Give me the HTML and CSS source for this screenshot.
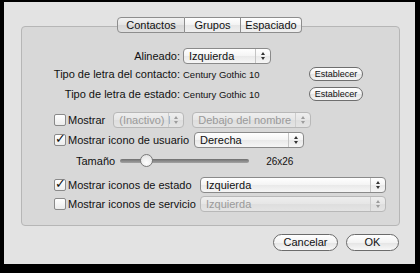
FILE: index.html
```html
<!DOCTYPE html>
<html lang="es">
<head>
  <meta charset="UTF-8">
  <title>Preferencias de lista</title>
  <link rel="stylesheet" href="styles.css">
</head>
<body>
<div class="window">
  <div class="tabs">
    <span class="tab on t1">Contactos</span>
    <span class="tab t2">Grupos</span>
    <span class="tab t3">Espaciado</span>
  </div>

  <div class="box">
    <div class="row r1">
      <span class="lbl">Alineado:</span>
      <div class="popup align">Izquierda<i class="arr"></i></div>
    </div>
    <div class="row r2">
      <span class="lbl">Tipo de letra del contacto:</span>
      <span class="font">Century Gothic 10</span>
      <button class="small">Establecer</button>
    </div>
    <div class="row r3">
      <span class="lbl">Tipo de letra de estado:</span>
      <span class="font">Century Gothic 10</span>
      <button class="small">Establecer</button>
    </div>

    <div class="row r4 chk">
      <span class="cb"></span><span class="txt">Mostrar</span>
      <div class="popup off show">(Inactivo) I<i class="arr"></i></div>
      <div class="popup off where">Debajo del nombre<i class="arr"></i></div>
    </div>
    <div class="row r5 chk">
      <span class="cb on">&#10003;</span><span class="txt">Mostrar icono de usuario</span>
      <div class="popup side">Derecha<i class="arr"></i></div>
    </div>
    <div class="row r6 size">
      <span class="txt">Tamaño</span>
      <div class="slider"><span class="knob"></span></div>
      <span class="dim">26x26</span>
    </div>

    <div class="row r7 chk">
      <span class="cb on">&#10003;</span><span class="txt fixed">Mostrar iconos de estado</span>
      <div class="popup wide">Izquierda<i class="arr"></i></div>
    </div>
    <div class="row r8 chk">
      <span class="cb"></span><span class="txt fixed">Mostrar iconos de servicio</span>
      <div class="popup wide off">Izquierda<i class="arr"></i></div>
    </div>
  </div>

  <div class="actions">
    <button class="big cancel">Cancelar</button>
    <button class="big ok">OK</button>
  </div>
</div>
</body>
</html>
```

FILE: styles.css
```css
* {
  box-sizing: border-box;
}

body {
  margin: 0;
  padding: 2px 5px 9px 4px;
  background: #000;
  font-family: "Liberation Sans", Arial, sans-serif;
  font-size: 11px;
  color: #111;
}

.window {
  width: 411px;
  height: 262px;
  background: #e3e3e3;
  overflow: hidden;
  padding-top: 15px;
}

/* segmented tabs */
.tabs {
  position: relative;
  z-index: 1;
  display: flex;
  justify-content: center;
  height: 16px;
}

.tab {
  height: 16px;
  line-height: 14px;
  text-align: center;
  border: 1px solid #8d8d8d;
  border-left: none;
  background: linear-gradient(#ffffff, #f3f3f3 50%, #e6e6e6 51%, #efefef);
  font-size: 11px;
}

.tab:first-child {
  border-left: 1px solid #8d8d8d;
  border-radius: 4px 0 0 4px;
}

.tab:last-child {
  border-radius: 0 4px 4px 0;
}

.tab.on {
  background: linear-gradient(#f2f2f2, #e4e4e4 50%, #d6d6d6 51%, #e0e0e0);
}

.t1 { width: 68px; }
.t2 { width: 56px; }
.t3 { width: 61px; }

/* group box */
.box {
  margin: -7px 15px 0 17px;
  height: 200px;
  background: #d8d8d8;
  border: 1px solid #b6b6b6;
  border-radius: 4px;
  padding-top: 20px;
}

.row {
  display: flex;
  align-items: center;
  height: 18px;
  white-space: nowrap;
}

.r3 { margin-top: 2px; }
.r4 { margin-top: 8px; }
.r5 { margin-top: 2px; }
.r6 { margin-top: 3px; }
.r7 { margin-top: 6px; }
.r8 { margin-top: 1px; }

.lbl {
  width: 158px;
  text-align: right;
  margin-right: 3px;
}

.font {
  width: 126px;
  font-size: 9.5px;
}

/* popups */
.popup {
  position: relative;
  height: 16px;
  line-height: 14px;
  padding-left: 5px;
  border: 1px solid #8a8a8a;
  border-radius: 4px;
  background: linear-gradient(#ffffff, #f4f4f4 50%, #e9e9e9 51%, #f6f6f6);
  overflow: hidden;
}

.popup .arr {
  position: absolute;
  right: 0;
  top: 0;
  width: 15px;
  height: 14px;
  border-left: 1px solid #c4c4c4;
}

.popup .arr:before,
.popup .arr:after {
  content: '';
  position: absolute;
  left: 5px;
  border-left: 2.5px solid transparent;
  border-right: 2.5px solid transparent;
}

.popup .arr:before {
  top: 3px;
  border-bottom: 3px solid #333;
}

.popup .arr:after {
  top: 8px;
  border-top: 3px solid #333;
}

.popup.off {
  color: #9a9a9a;
  border-color: #b8b8b8;
  background: linear-gradient(#eeeeee, #e6e6e6 50%, #dedede 51%, #e4e4e4);
}

.popup.off .arr {
  border-left-color: #cdcdcd;
}

.popup.off .arr:before { border-bottom-color: #9c9c9c; }
.popup.off .arr:after { border-top-color: #9c9c9c; }

.align { width: 88px; }
.show { width: 71px; margin-left: 8px; }
.where { width: 119px; margin-left: 8px; }
.side { width: 110px; margin-left: 5px; }
.wide { width: 186px; }

/* checkbox rows */
.chk {
  padding-left: 32px;
}

.txt.fixed {
  width: 132px;
}

.cb {
  width: 12px;
  height: 12px;
  margin-right: 2px;
  border: 1px solid #8a8a8a;
  border-radius: 2px;
  background: linear-gradient(#ffffff, #ececec);
  font-family: "DejaVu Sans", sans-serif;
  font-size: 13px;
  line-height: 8px;
  font-weight: bold;
}

/* slider */
.size {
  padding-left: 54px;
}

.slider {
  position: relative;
  width: 129px;
  height: 4px;
  margin-left: 5px;
  border-radius: 2px;
  background: linear-gradient(#6f6f6f, #a3a3a3);
}

.knob {
  position: absolute;
  left: 20px;
  top: -5px;
  width: 13px;
  height: 13px;
  border-radius: 50%;
  border: 1px solid #7a7a7a;
  background: radial-gradient(circle at 50% 70%, #ffffff, #dedede);
}

.dim {
  margin-left: 17px;
  font-size: 10px;
}

/* buttons */
button {
  font-family: "Liberation Sans", Arial, sans-serif;
  color: #111;
  padding: 0;
  cursor: pointer;
}

.small {
  width: 54px;
  height: 14px;
  font-size: 9px;
  border: 1px solid #6e6e6e;
  border-radius: 7px;
  background: linear-gradient(#ffffff, #f2f2f2 50%, #e3e3e3 51%, #f5f5f5);
}

.actions {
  display: flex;
  justify-content: flex-end;
  gap: 8px;
  margin: 8px 16px 0 0;
}

.big {
  height: 17px;
  font-size: 11px;
  line-height: 15px;
  border: 1px solid #6b6b6b;
  border-radius: 9px;
  background: linear-gradient(#ffffff, #f3f3f3 50%, #e4e4e4 51%, #f7f7f7);
}

.cancel { width: 65px; }
.ok { width: 53px; }
```
